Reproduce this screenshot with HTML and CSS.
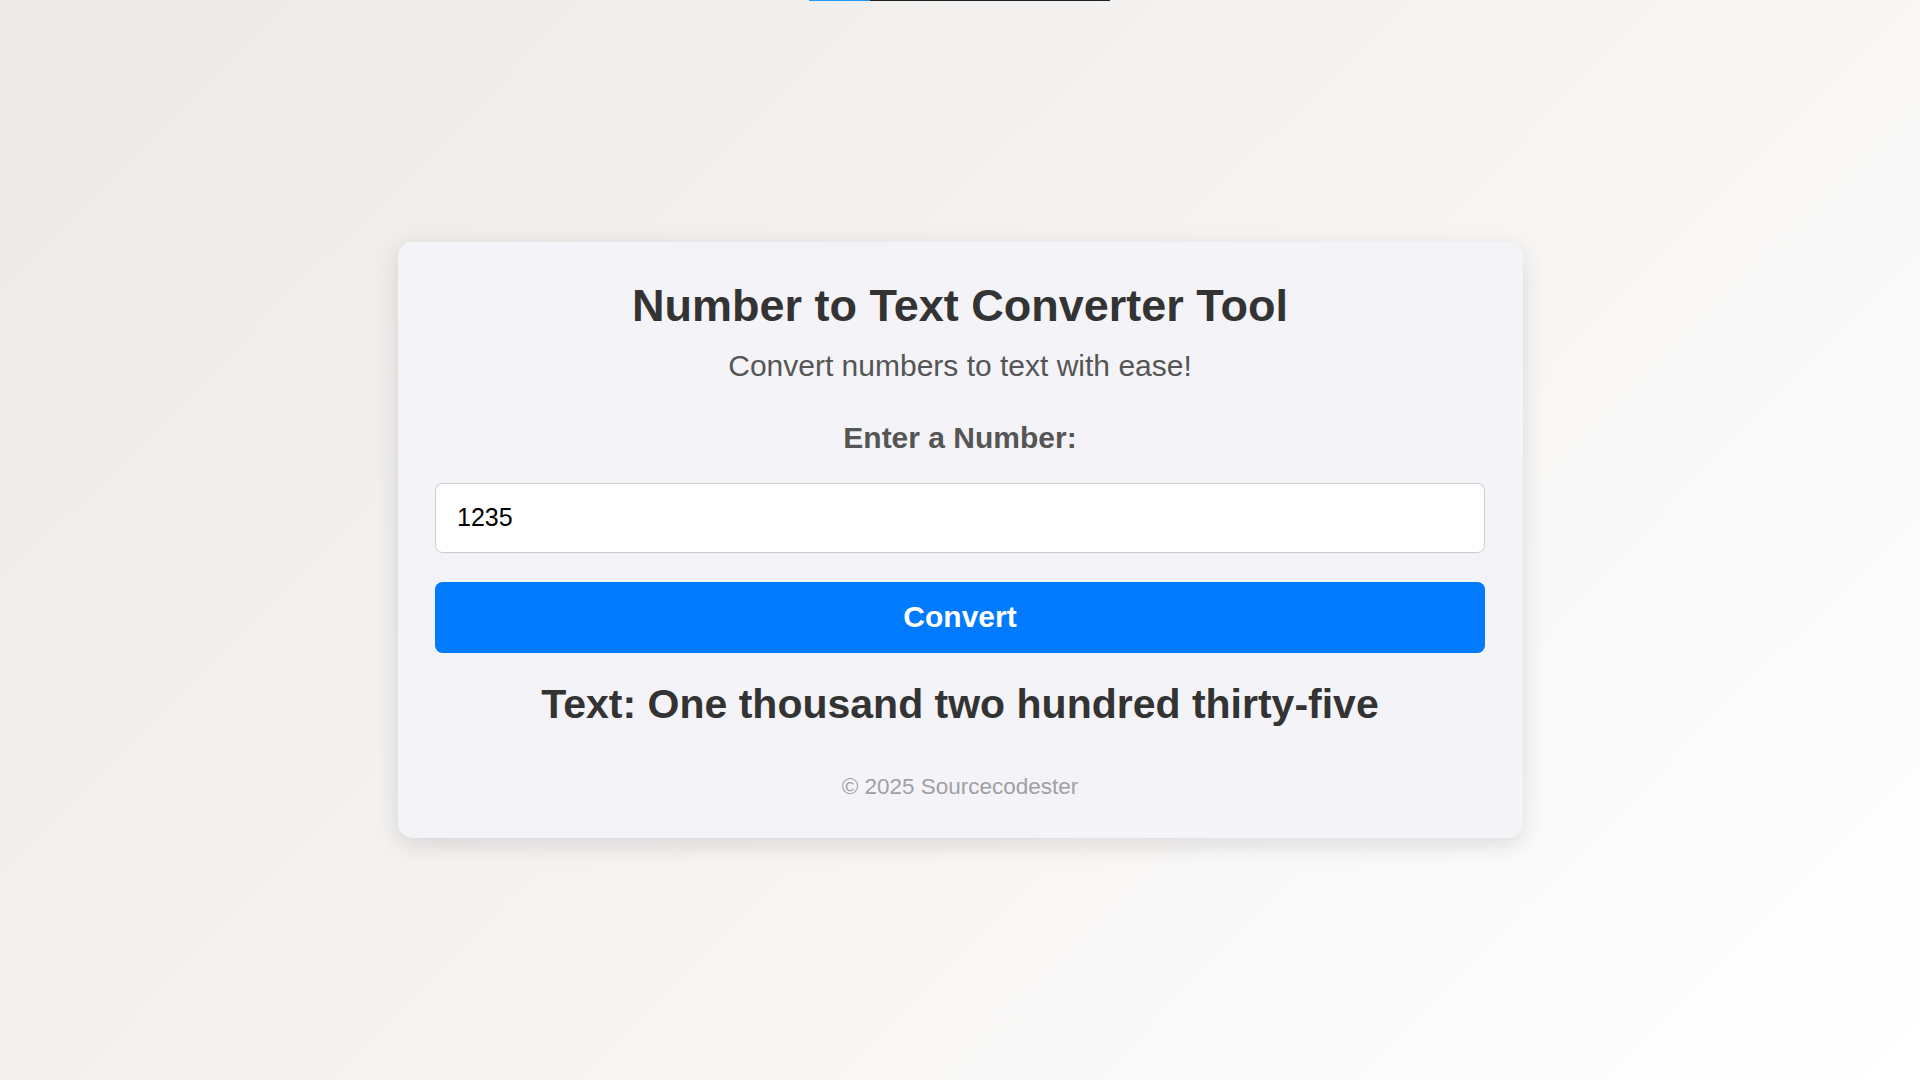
FILE: index.html
```html
<!DOCTYPE html>
<html lang="en">
<head>
  <meta charset="UTF-8">
  <meta name="viewport" content="width=device-width, initial-scale=1.0">
  <title>Number to Text Converter Tool</title>
  <link rel="stylesheet" href="styles.css">
</head>
<body>
  <div class="top-line"><span class="top-line-fill"></span></div>
  <div class="container">
    <h1>Number to Text Converter Tool</h1>
    <p class="subtitle">Convert numbers to text with ease!</p>
    <form onsubmit="convert(); return false;">
      <label for="number">Enter a Number:</label>
      <input type="text" id="number" value="1235">
      <button type="submit">Convert</button>
    </form>
    <div class="result" id="result">Text: One thousand two hundred thirty-five</div>
    <footer>&copy; 2025 Sourcecodester</footer>
  </div>

  <script>
    const ones = ['', 'one', 'two', 'three', 'four', 'five', 'six', 'seven', 'eight', 'nine', 'ten',
      'eleven', 'twelve', 'thirteen', 'fourteen', 'fifteen', 'sixteen', 'seventeen', 'eighteen', 'nineteen'];
    const tens = ['', '', 'twenty', 'thirty', 'forty', 'fifty', 'sixty', 'seventy', 'eighty', 'ninety'];

    function toWords(n) {
      if (n < 20) return ones[n];
      if (n < 100) return tens[Math.floor(n / 10)] + (n % 10 ? '-' + ones[n % 10] : '');
      if (n < 1000) return ones[Math.floor(n / 100)] + ' hundred' + (n % 100 ? ' ' + toWords(n % 100) : '');
      if (n < 1000000) return toWords(Math.floor(n / 1000)) + ' thousand' + (n % 1000 ? ' ' + toWords(n % 1000) : '');
      return toWords(Math.floor(n / 1000000)) + ' million' + (n % 1000000 ? ' ' + toWords(n % 1000000) : '');
    }

    function convert() {
      const value = parseInt(document.getElementById('number').value, 10);
      const result = document.getElementById('result');

      // Check if input is valid
      if (isNaN(value) || value < 0) {
        result.innerText = 'Please enter a valid number.';
        return;
      }

      const words = value === 0 ? 'zero' : toWords(value);
      result.innerText = 'Text: ' + words.charAt(0).toUpperCase() + words.slice(1);
    }
  </script>
</body>
</html>
```

FILE: styles.css
```css
body {
  font-family: 'Liberation Sans', Arial, sans-serif;
  background: linear-gradient(135deg, #ece9e6, #ffffff);
  margin: 0;
  padding: 0;
  display: flex;
  justify-content: center;
  align-items: center;
  min-height: 100vh;
}
.top-line {
  position: fixed;
  top: 0;
  left: 809px;
  width: 301px;
  height: 1px;
  background: #222;
}
.top-line-fill {
  display: block;
  width: 61px;
  height: 100%;
  background: #2196f3;
}
.container {
  box-sizing: border-box;
  width: 1125px;
  padding: 37.5px 37.5px 38px;
  background: #f4f4f8;
  border-radius: 15px;
  box-shadow: 0 7px 24px rgba(0, 0, 0, 0.12);
  text-align: center;
}
h1 {
  color: #333;
  font-size: 45px;
  margin: 0 0 17px;
}
.subtitle {
  color: #555;
  font-size: 30px;
  margin: 0 0 38px;
}
form {
  margin: 0;
}
label {
  display: block;
  color: #555;
  font-size: 30px;
  font-weight: bold;
  margin-bottom: 28px;
}
input {
  display: block;
  box-sizing: border-box;
  width: 100%;
  height: 70px;
  padding: 0 21px;
  margin: 0 0 29.5px;
  border: 1.5px solid #ccc;
  border-radius: 7.5px;
  background: #fff;
  color: #000;
  font-family: inherit;
  font-size: 25px;
  outline: none;
}
input:focus {
  border-color: #007bff;
}
button {
  display: block;
  width: 100%;
  height: 70.5px;
  border: none;
  border-radius: 7.5px;
  background-color: #007bff;
  color: white;
  font-family: inherit;
  font-size: 30px;
  font-weight: bold;
  cursor: pointer;
  margin: 0;
}
button:hover {
  background-color: #0069d9;
}
.result {
  margin-top: 28.5px;
  color: #333;
  font-size: 41px;
  font-weight: bold;
}
footer {
  margin-top: 46px;
  color: #a0a0a4;
  font-size: 22.5px;
}
```
